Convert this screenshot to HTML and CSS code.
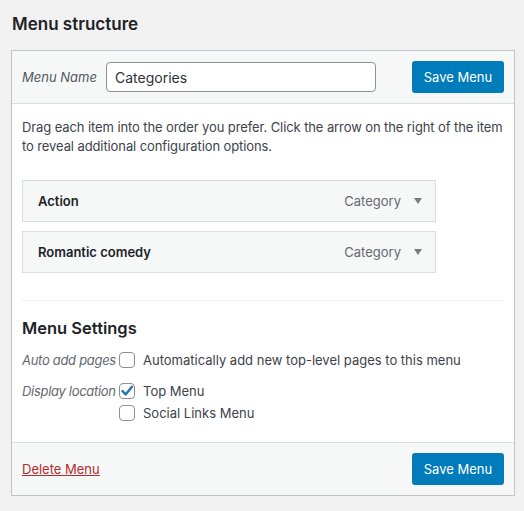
FILE: index.html
```html
<!DOCTYPE html>
<html>
<head>
<meta charset="utf-8">
<link rel="stylesheet" href="styles.css">
</head>
<body>
<div class="page">
  <h2 class="title">Menu structure</h2>
  <div class="box">
    <div class="header">
      <label class="name-label">Menu Name</label>
      <input class="name-input" type="text" value="Categories">
      <button class="btn">Save Menu</button>
    </div>
    <div class="body">
      <p class="desc">Drag each item into the order you prefer. Click the arrow on the right of the item to reveal additional configuration options.</p>
      <ul class="items">
        <li class="item"><span class="item-title">Action</span><span class="item-type">Category</span><span class="arrow"></span></li>
        <li class="item"><span class="item-title">Romantic comedy</span><span class="item-type">Category</span><span class="arrow"></span></li>
      </ul>
      <div class="settings">
        <h3 class="settings-title">Menu Settings</h3>
        <div class="row">
          <div class="row-label">Auto add pages</div>
          <div class="row-opts">
            <label class="opt"><span class="cb"></span>Automatically add new top-level pages to this menu</label>
          </div>
        </div>
        <div class="row">
          <div class="row-label">Display location</div>
          <div class="row-opts">
            <label class="opt"><span class="cb checked"><svg viewBox="0 0 16 16" width="16" height="16"><path d="M3.4 8 L6.6 11.4 L13 3.8" fill="none" stroke="#2271b1" stroke-width="2.4" stroke-linecap="round" stroke-linejoin="round"/></svg></span>Top Menu</label>
            <label class="opt"><span class="cb"></span>Social Links Menu</label>
          </div>
        </div>
      </div>
    </div>
    <div class="footer">
      <a class="delete" href="#">Delete Menu</a>
      <button class="btn">Save Menu</button>
    </div>
  </div>
</div>
</body>
</html>
```
FILE: styles.css
```css
html, body {
  margin: 0;
  padding: 0;
  background: #f1f1f1;
}
body {
  font-family: Inter, "Noto Sans", sans-serif;
  font-size: 13px;
  color: #3c434a;
}
.page {
  padding: 0 9px 0 11px;
}
.title {
  margin: 0;
  padding: 13px 0 0 1px;
  height: 50px;
  box-sizing: border-box;
  font-size: 17px;
  font-weight: 600;
  color: #1d2327;
  line-height: 22px;
}
.box {
  border: 1px solid #c3c4c7;
  background: #fff;
  width: 504px;
  box-sizing: border-box;
}
.header {
  display: flex;
  align-items: center;
  height: 52px;
  padding: 0 10px;
  background: #f6f7f7;
  border-bottom: 1px solid #dcdcde;
}
.name-label {
  font-style: italic;
  color: #50575e;
  width: 84px;
}
.name-input {
  width: 270px;
  height: 30px;
  box-sizing: border-box;
  border: 1px solid #8c8f94;
  border-radius: 4px;
  padding: 0 8px;
  font-family: inherit;
  font-size: 14px;
  color: #2c3338;
  background: #fff;
}
.btn {
  margin-left: auto;
  height: 32px;
  width: 92px;
  background: #007cba;
  color: #fff;
  border: none;
  border-radius: 3px;
  font-family: inherit;
  font-size: 13px;
  padding: 0;
}
.body {
  padding: 14px 10px 0 10px;
}
.desc {
  margin: 0;
  line-height: 19px;
  font-size: 13px;
  letter-spacing: -0.1px;
}
.items {
  list-style: none;
  margin: 24px 0 0 0;
  padding: 0 0 27px 0;
  border-bottom: 1px solid #f0f0f1;
}
.item {
  display: flex;
  align-items: center;
  width: 414px;
  height: 42px;
  box-sizing: border-box;
  border: 1px solid #dcdcde;
  background: #f6f7f7;
  padding: 0 13px 0 15px;
  margin-bottom: 9px;
}
.item:last-child { margin-bottom: 0; }
.item-title {
  font-weight: 600;
  color: #1d2327;
  flex: 1;
}
.item-type {
  color: #646970;
  margin-right: 13px;
}
.arrow {
  width: 0;
  height: 0;
  border-left: 4px solid transparent;
  border-right: 4px solid transparent;
  border-top: 6px solid #787c82;
}
.settings {
  padding: 15px 0 21px 0;
}
.settings-title {
  margin: 0 0 12px 0;
  font-size: 16.5px;
  font-weight: 600;
  color: #1d2327;
  line-height: 24px;
}
.row {
  display: flex;
  margin-bottom: 15px;
}
.row:last-child { margin-bottom: 0; }
.row-label {
  width: 97px;
  flex: none;
  white-space: nowrap;
  font-style: italic;
  color: #646970;
  line-height: 16px;
  letter-spacing: -0.3px;
}
.row-opts {
  display: flex;
  flex-direction: column;
  gap: 6px;
}
.opt {
  display: flex;
  align-items: center;
  line-height: 16px;
  color: #3c434a;
}
.cb {
  width: 16px;
  height: 16px;
  box-sizing: border-box;
  border: 1px solid #8c8f94;
  border-radius: 4px;
  margin-right: 8px;
  background: #fff;
  display: inline-flex;
  align-items: center;
  justify-content: center;
  position: relative;
}
.cb svg {
  position: absolute;
  left: -1px;
  top: -1px;
}
.footer {
  display: flex;
  align-items: center;
  height: 52px;
  padding: 0 10px;
  background: #f6f7f7;
  border-top: 1px solid #dcdcde;
}
.delete {
  color: #b32d2e;
  text-decoration: underline;
}
```
